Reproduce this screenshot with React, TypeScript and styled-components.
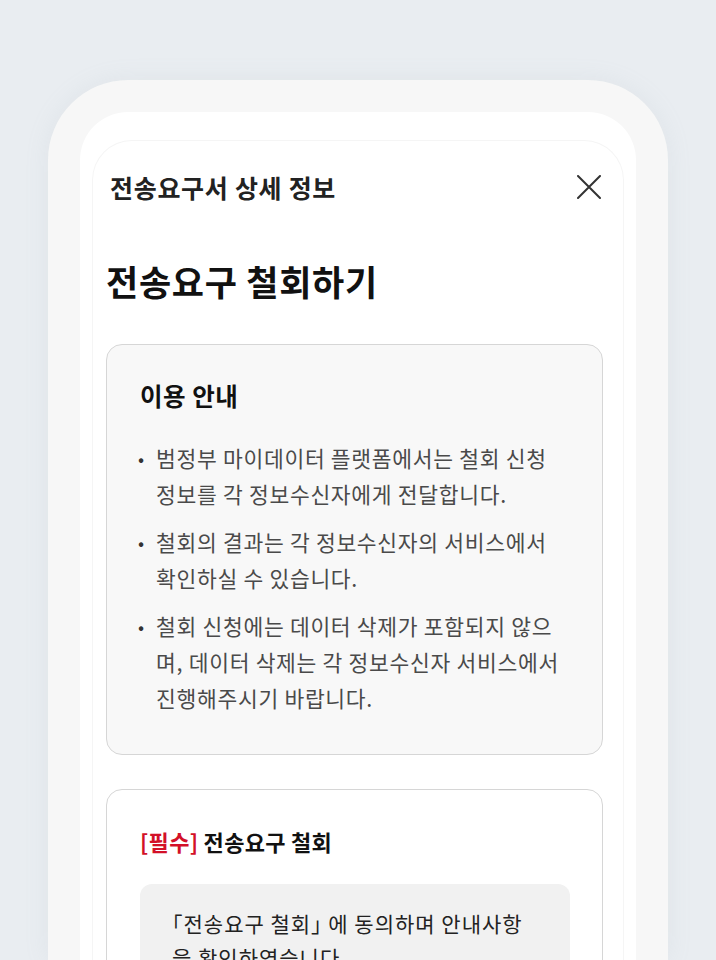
import React from "react";
import styled, { createGlobalStyle } from "styled-components";

const Global = createGlobalStyle`
  html, body {
    margin: 0;
    padding: 0;
    background: #e9edf1;
  }
  body {
    font-family: "Noto Sans CJK KR", "Noto Sans", sans-serif;
    height: 960px;
    overflow: hidden;
  }
`;

const Page = styled.div`
  padding: 80px 48px 0 48px;
  height: 960px;
  box-sizing: border-box;
`;

const PhoneFrame = styled.div`
  background: #f7f7f7;
  border-radius: 80px 80px 0 0;
  padding: 32px 32px 0 32px;
  height: 100%;
  box-sizing: border-box;
  box-shadow: 0 0 24px rgba(160, 170, 185, 0.12);
`;

const Screen = styled.div`
  background: #ffffff;
  border-radius: 48px 48px 0 0;
  padding: 28px 12px 0 12px;
  height: 100%;
  box-sizing: border-box;
`;

const Sheet = styled.div`
  border-radius: 40px 40px 0 0;
  border: 1px solid #f5f5f5;
  border-bottom: none;
  height: 100%;
  box-sizing: border-box;
  padding: 22px 20px 0 13px;
`;

const Header = styled.div`
  display: flex;
  align-items: center;
  justify-content: space-between;
  height: 48px;
  padding-left: 4px;
`;

const HeaderTitle = styled.h2`
  margin: 0;
  font-size: 25px;
  font-weight: 700;
  color: #222;
  letter-spacing: 0.7px;
`;

const CloseButton = styled.button`
  border: none;
  background: none;
  padding: 0;
  width: 26px;
  height: 26px;
  margin-right: 1px;
  display: flex;
  align-items: center;
  justify-content: center;
  cursor: pointer;
`;

const Title = styled.h1`
  margin: 48px 0 0 0;
  font-size: 35px;
  line-height: 44px;
  font-weight: 700;
  color: #111;
  letter-spacing: 0.7px;
`;

const Box = styled.section<{ $tone: "gray" | "white" }>`
  margin-top: ${(p) => (p.$tone === "gray" ? "41px" : "34px")};
  background: ${(p) => (p.$tone === "gray" ? "#f8f8f8" : "#ffffff")};
  border: 1px solid #d6d6d6;
  border-radius: 16px;
  padding: ${(p) => (p.$tone === "gray" ? "35px 33px 38px 33px" : "36px 33px 0 33px")};
`;

const BoxTitle = styled.h3`
  margin: 0;
  font-size: 24.5px;
  line-height: 32px;
  font-weight: 700;
  color: #111;
  letter-spacing: 0.5px;
`;

const List = styled.ul`
  list-style: none;
  margin: 28px 0 0 0;
  padding: 0;
  display: flex;
  flex-direction: column;
  gap: 12px;
`;

const Item = styled.li`
  display: flex;
  font-size: 21.5px;
  line-height: 36px;
  color: #4a4a4a;
  letter-spacing: 0.7px;
`;

const Dot = styled.span`
  flex: 0 0 16px;
  margin-left: -2px;
  margin-right: 2px;
  font-size: 18px;
  color: #333;
  letter-spacing: 0;
`;

const ReqTitle = styled.h3`
  margin: 0;
  font-size: 22px;
  line-height: 30px;
  font-weight: 700;
  color: #111;
  letter-spacing: 0.3px;
`;

const Required = styled.span`
  color: #d31028;
`;

const AgreeBox = styled.div`
  margin-top: 28px;
  background: #f1f1f1;
  border-radius: 12px;
  padding: 22px 32px 20px 32px;
  width: 430px;
  box-sizing: border-box;
  font-size: 21px;
  line-height: 34px;
  color: #222;
  letter-spacing: 1px;
  font-feature-settings: "halt";
`;

const bullets = [
  "범정부 마이데이터 플랫폼에서는 철회 신청 정보를 각 정보수신자에게 전달합니다.",
  "철회의 결과는 각 정보수신자의 서비스에서 확인하실 수 있습니다.",
  "철회 신청에는 데이터 삭제가 포함되지 않으며, 데이터 삭제는 각 정보수신자 서비스에서 진행해주시기 바랍니다.",
];

export default function App() {
  return (
    <>
      <Global />
      <Page>
        <PhoneFrame>
          <Screen>
            <Sheet>
              <Header>
                <HeaderTitle>전송요구서 상세 정보</HeaderTitle>
                <CloseButton aria-label="닫기">
                  <svg width="24" height="24" viewBox="0 0 24 24" fill="none">
                    <path d="M1 1L23 23M23 1L1 23" stroke="#333" strokeWidth="2" strokeLinecap="round" />
                  </svg>
                </CloseButton>
              </Header>
              <Title>전송요구 철회하기</Title>
              <Box $tone="gray">
                <BoxTitle>이용 안내</BoxTitle>
                <List>
                  {bullets.map((b) => (
                    <Item key={b}>
                      <Dot>•</Dot>
                      <span>{b}</span>
                    </Item>
                  ))}
                </List>
              </Box>
              <Box $tone="white">
                <ReqTitle>
                  <Required>[필수]</Required> 전송요구 철회
                </ReqTitle>
                <AgreeBox>「전송요구 철회」 에 동의하며 안내사항을 확인하였습니다.</AgreeBox>
              </Box>
            </Sheet>
          </Screen>
        </PhoneFrame>
      </Page>
    </>
  );
}
